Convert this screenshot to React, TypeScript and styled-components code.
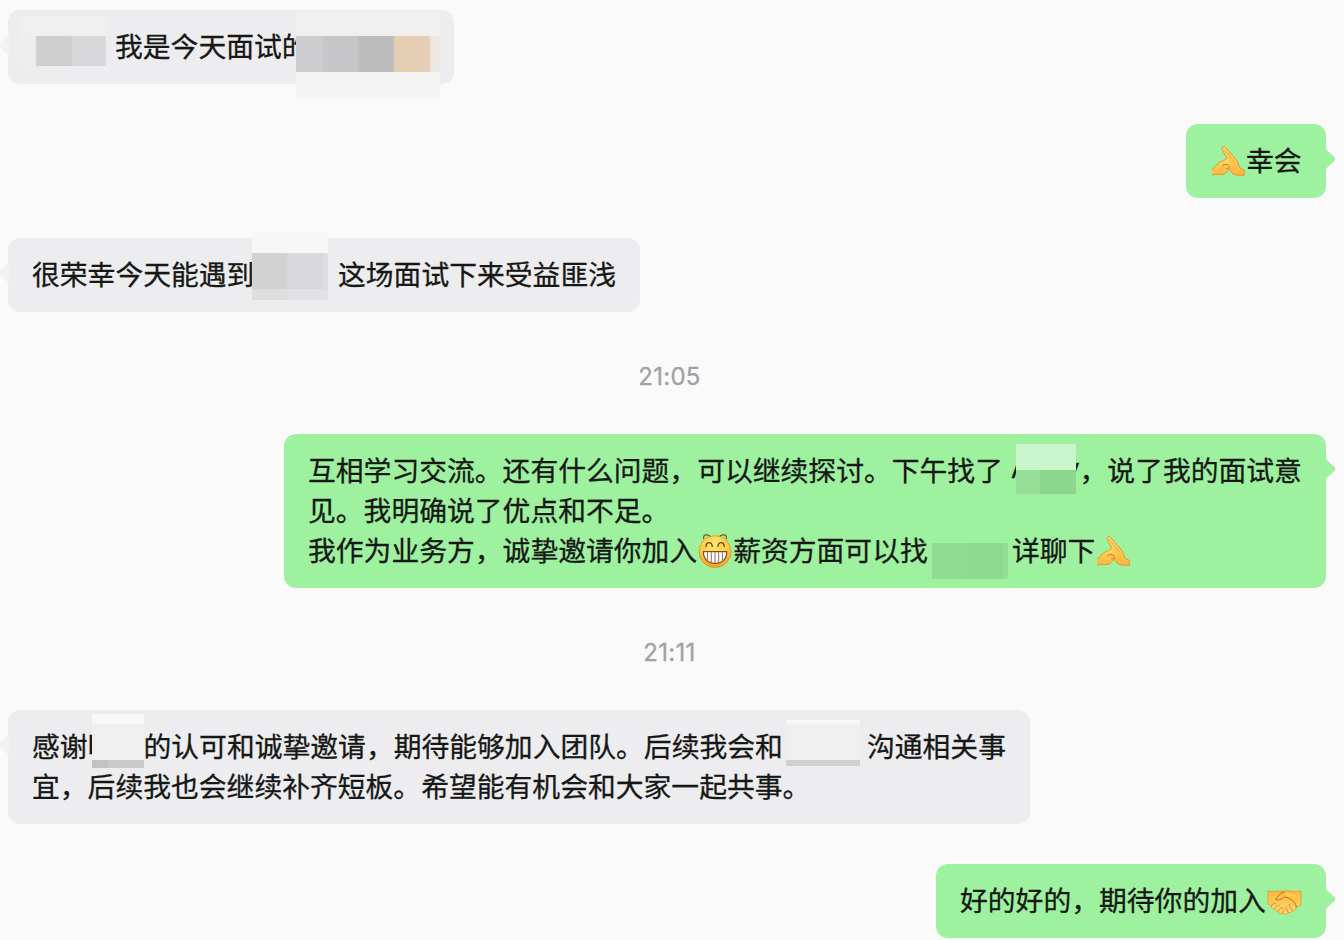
import React from 'react'
import styled, { createGlobalStyle } from 'styled-components'

const GlobalStyle = createGlobalStyle`
    * {
        box-sizing: border-box;
    }

    body {
        margin: 0;
        background-color: #fafafa;
        overflow: hidden;
    }
`

const ChatContainer = styled.main`
    display: flex;
    flex-direction: column;
    gap: 40px;
    height: 940px;
    padding: 10px 18px 0 8px;
    background-color: #fafafa;
    color: #161816;
    font-family: 'Noto Sans CJK SC', sans-serif;
    font-size: 27.8px;
    line-height: 40px;
    -webkit-text-stroke: 0.3px currentColor;
    overflow: hidden;
`

const Bubble = styled.div<{ mine?: boolean; width: number }>`
    position: relative;
    display: flex;
    flex-direction: column;
    flex-shrink: 0;
    align-self: ${({ mine }) => (mine ? 'flex-end' : 'flex-start')};
    width: ${({ width }) => width}px;
    padding: 15px 24px 19px;
    border-radius: 12px;
    background-color: ${({ mine }) => (mine ? '#9ef29f' : '#ededef')};
`

const Tail = styled.svg<{ mine?: boolean }>`
    position: absolute;
    top: 22px;
    ${({ mine }) => (mine ? 'right: -10px;' : 'left: -10px;')}
    width: 11px;
    height: 28px;
    fill: ${({ mine }) => (mine ? '#9ef29f' : '#f2f2f3')};
    transform: ${({ mine }) => (mine ? 'none' : 'scaleX(-1)')};
`

const Line = styled.div`
    display: flex;
    align-items: center;
    height: 40px;
    white-space: pre;
`

const Latin = styled.span<{ width: number; end?: boolean }>`
    display: flex;
    flex-shrink: 0;
    justify-content: ${({ end }) => (end ? 'flex-end' : 'flex-start')};
    width: ${({ width }) => width}px;
    font-family: Inter, sans-serif;
    font-size: 26px;
`

// Pixelated block over a name, made of stacked strips
const Mosaic = styled.span<{ width: number; margin: string }>`
    z-index: 1;
    display: flex;
    flex-direction: column;
    flex-shrink: 0;
    align-self: flex-start;
    width: ${({ width }) => width}px;
    margin: ${({ margin }) => margin};
`

const Strip = styled.span<{ height: number; fill: string }>`
    height: ${({ height }) => height}px;
    background: ${({ fill }) => fill};
`

const Time = styled.time`
    flex-shrink: 0;
    height: 42px;
    padding: 5px 0 0 5px;
    color: #a1a1a4;
    font-family: Inter, sans-serif;
    font-size: 24px;
    letter-spacing: 0.3px;
    text-align: center;
`

const Emoji = styled.svg`
    flex-shrink: 0;
    width: 36px;
    height: 36px;
    margin-top: 3px;
`

const Salute: React.FC = () => (
    <Emoji viewBox="0 0 36 36">
        <defs>
            <linearGradient id="salute" x1="0" y1="0" x2="0" y2="1">
                <stop offset="0" stopColor="#ffd869" />
                <stop offset="1" stopColor="#ffb63a" />
            </linearGradient>
        </defs>
        <path
            d="M12.2 6.6C11 4 13.6 2.2 15.4 4.3L26.2 16.6C28.6 19.4 29 24.6 31 26L34.3 27.2V32.2C29 32.4 25 32.4 22.5 30.4L18.5 25.5C19.5 20 15.5 12.5 12.2 6.6Z"
            fill="url(#salute)"
            stroke="#dd8a20"
            strokeWidth="0.8"
            strokeLinejoin="round"
        />
        <path
            d="M13.6 5.6L24.6 19.2"
            fill="none"
            stroke="#e9a036"
            strokeWidth="0.8"
        />
        <path
            d="M2 26C5.4 24.6 6.2 21.2 9.5 19.4C12 17.9 14.5 17.5 16.4 15.8C18.4 15.4 19.2 17.6 19.8 19.4C21.2 21.2 21.8 23 20.8 25.2C19.6 27.2 17.4 27 16.8 28.7C15 31.2 12.8 31.6 10 31.5C7 31.2 5.2 30.9 2.3 32.2Z"
            fill="url(#salute)"
        />
        <path
            d="M2 26C5.4 24.6 6.2 21.2 9.5 19.4C12 17.9 14.5 17.5 16.4 15.8M20.8 25.2C19.6 27.2 17.4 27 16.8 28.7C15 31.2 12.8 31.6 10 31.5C7 31.2 5.2 30.9 2.3 32.2"
            fill="none"
            stroke="#dd8a20"
            strokeWidth="0.8"
        />
        <path
            d="M12.5 22.8C14.4 21 17.2 21 18.6 22.3C20.2 24 18.6 26.2 16.6 25.9"
            fill="none"
            stroke="#b96a10"
            strokeWidth="0.9"
            strokeLinecap="round"
        />
    </Emoji>
)

const Grin: React.FC = () => (
    <Emoji viewBox="0 0 36 36">
        <defs>
            <radialGradient id="grin" cx="0.48" cy="0.3" r="0.72">
                <stop offset="0" stopColor="#ffe873" />
                <stop offset="0.6" stopColor="#ffcd45" />
                <stop offset="1" stopColor="#ef9a22" />
            </radialGradient>
        </defs>
        <circle
            cx="18"
            cy="18.6"
            r="16"
            fill="url(#grin)"
            stroke="#dc9424"
            strokeWidth="0.8"
        />
        <path
            d="M6.6 5.6C6 2.2 9 0.6 12.8 3M29.4 5.6C30 2.2 27 0.6 23.2 3"
            fill="none"
            stroke="#8f5410"
            strokeWidth="1.2"
            strokeLinecap="round"
        />
        <path
            d="M8.9 13.4C9.6 8.4 14.6 8.4 15.3 13.4M20.9 13.4C21.6 8.4 26.6 8.4 27.3 13.4"
            fill="none"
            stroke="#713f0c"
            strokeWidth="1.4"
            strokeLinecap="round"
        />
        <path
            d="M6.4 18.6H29.8C29.9 25.6 25.6 30.3 18 30.3C10.6 30.3 6.3 25.6 6.4 18.6Z"
            fill="#fff"
            stroke="#8a4a14"
            strokeWidth="1.2"
            strokeLinejoin="round"
        />
        <path
            d="M10.6 19.2V27M14.3 19.2V29.3M18 19.2V29.8M21.7 19.2V29.3M25.4 19.2V27"
            stroke="#8f6a55"
            strokeWidth="1"
        />
    </Emoji>
)

const Handshake: React.FC = () => (
    <Emoji viewBox="0 0 36 36">
        <defs>
            <linearGradient id="shake" x1="0" y1="0" x2="0" y2="1">
                <stop offset="0" stopColor="#ffb638" />
                <stop offset="1" stopColor="#ffda78" />
            </linearGradient>
        </defs>
        <path
            d="M2 7.8C6 9 9 8.6 12 8.2C15 7.8 17 8.7 18.3 8.5C21.2 7.2 24.2 7.5 27 8.5C29.5 9.2 32 8.9 35 8V22.3C33 22.4 31.3 23.1 30.3 24.5C29.8 27.3 27.7 27.8 26.4 27.8C25.3 30.1 23.3 30 22.2 29.6C20.5 32 18.5 31.2 16.8 30.3C14.7 31.5 13.2 30 12.6 28.7C10.5 29 9 27.7 8.7 26.2C6.3 26.3 4.9 24.7 5.1 22.5L2 21Z"
            fill="url(#shake)"
            stroke="#de9128"
            strokeWidth="0.7"
            strokeLinejoin="round"
        />
        <path
            d="M18.3 8.7C14.5 10 11.3 13.2 9.8 16.4C13.3 17.8 16.4 15.8 18.4 14.1C21.1 14.2 24.6 15.6 27.2 18.2C29.2 20.3 30.2 22 30.3 24.5"
            fill="none"
            stroke="#c06c12"
            strokeWidth="1"
            strokeLinecap="round"
        />
        <path
            d="M5.5 22.8C6.2 21 8.1 19.6 9.8 20.6M8.9 25.8C9.7 23.7 11.6 21.8 13.4 22.6M12.6 28.2C13.2 26.1 14.6 24.4 16.8 24.9M16.8 29.7C16.6 28 17.6 26.4 19.2 26.7M23 21.4L26.3 27.6M19.7 23.7L22.2 29.3"
            fill="none"
            stroke="#d8892a"
            strokeWidth="0.9"
            strokeLinecap="round"
        />
        <path
            d="M20 11.2C24 11 28 13.5 32.4 13"
            fill="none"
            stroke="#ffd064"
            strokeWidth="1.4"
            strokeLinecap="round"
        />
    </Emoji>
)

interface MessageProps {
    mine?: boolean
    width: number
    children: React.ReactNode
}

const Message: React.FC<MessageProps> = ({ mine, width, children }) => (
    <Bubble mine={mine} width={width}>
        <Tail mine={mine} viewBox="0 0 11 28">
            <path d="M0 0C0.6 2.6 1.5 3.8 3.2 5.4L9.2 10.8Q11.6 13 9.2 15.2L3.2 20.6C1.5 22.2 0.6 23.4 0 26Z" />
        </Tail>
        {children}
    </Bubble>
)

const App: React.FC = () => {
    return (
        <>
            <GlobalStyle />
            <ChatContainer>
                <Message width={446}>
                    <Line>
                        <Mosaic width={86} margin="-9px 9px 0 -12px">
                            <Strip height={20} fill="#efefef" />
                            <Strip
                                height={30}
                                fill="linear-gradient(90deg, #eeeeef 15px, #cecece 17px 51px, #d8d8da 53px)"
                            />
                        </Mosaic>
                        <span>我是今天面试的</span>
                        <Mosaic width={144} margin="-13px 0 0 -13.6px">
                            <Strip height={24} fill="#efefef" />
                            <Strip
                                height={36}
                                fill="linear-gradient(90deg, #cdcdcf 26px, #c6c6c8 28px 61px, #bcbcbc 63px 97px, #e6ceb4 99px 133px, #ece7e1 135px)"
                            />
                            <Strip height={26} fill="#f4f4f4" />
                        </Mosaic>
                    </Line>
                </Message>
                <Message mine width={140}>
                    <Line>
                        <Salute />
                        <span>幸会</span>
                    </Line>
                </Message>
                <Message width={632}>
                    <Line>
                        <span>很荣幸今天能遇到</span>
                        <Mosaic width={76} margin="-21px 10px 0 -2.4px">
                            <Strip height={21} fill="#f7f7f7" />
                            <Strip
                                height={36}
                                fill="linear-gradient(90deg, #d2d2d2 34px, #d9d9db 36px 70px, #dedee0 72px)"
                            />
                            <Strip
                                height={11}
                                fill="linear-gradient(90deg, #dedede 34px, #e1e1e3 36px)"
                            />
                        </Mosaic>
                        <span>这场面试下来受益匪浅</span>
                    </Line>
                </Message>
                <Time>21:05</Time>
                <Message mine width={1042}>
                    <Line>
                        <span>
                            互相学习交流。还有什么问题，可以继续探讨。下午找了
                        </span>
                        <Mosaic width={8} margin="0" />
                        <Latin width={5}>A</Latin>
                        <Mosaic width={60} margin="-5px 0 0">
                            <Strip height={26} fill="#c8f5c9" />
                            <Strip
                                height={24}
                                fill="linear-gradient(90deg, #97df98 23px, #8dd68e 25px)"
                            />
                        </Mosaic>
                        <Latin width={3.6} end>
                            y
                        </Latin>
                        <span>，说了我的面试意</span>
                    </Line>
                    <Line>
                        <span>见。我明确说了优点和不足。</span>
                    </Line>
                    <Line>
                        <span>我作为业务方，诚挚邀请你加入</span>
                        <Grin />
                        <span>薪资方面可以找</span>
                        <Mosaic width={76} margin="14px 4px 0 4.2px">
                            <Strip
                                height={36}
                                fill="linear-gradient(90deg, #90dc92 34px, #8ed98f 36px 70px, #93df94 72px)"
                            />
                        </Mosaic>
                        <span>详聊下</span>
                        <Salute />
                    </Line>
                </Message>
                <Time>21:11</Time>
                <Message width={1022}>
                    <Line>
                        <span>感谢</span>
                        <Latin width={4.4}>I</Latin>
                        <Mosaic width={52} margin="-11px -0.5px 0 0">
                            <Strip height={10} fill="#f8f8f8" />
                            <Strip height={36} fill="#efefef" />
                            <Strip
                                height={8}
                                fill="linear-gradient(90deg, #c2c2c2 15px, #cacacb 17px)"
                            />
                        </Mosaic>
                        <span>的认可和诚挚邀请，期待能够加入团队。后续我会和</span>
                        <Mosaic width={74} margin="-5px 7px 0 3.1px">
                            <Strip
                                height={40}
                                fill="linear-gradient(#f8f8f8 3px, #efefef 6px)"
                            />
                            <Strip height={6} fill="#d0d0d1" />
                        </Mosaic>
                        <span>沟通相关事</span>
                    </Line>
                    <Line>
                        <span>
                            宜，后续我也会继续补齐短板。希望能有机会和大家一起共事。
                        </span>
                    </Line>
                </Message>
                <Message mine width={390}>
                    <Line>
                        <span>好的好的，期待你的加入</span>
                        <Handshake />
                    </Line>
                </Message>
            </ChatContainer>
        </>
    )
}

export default App
